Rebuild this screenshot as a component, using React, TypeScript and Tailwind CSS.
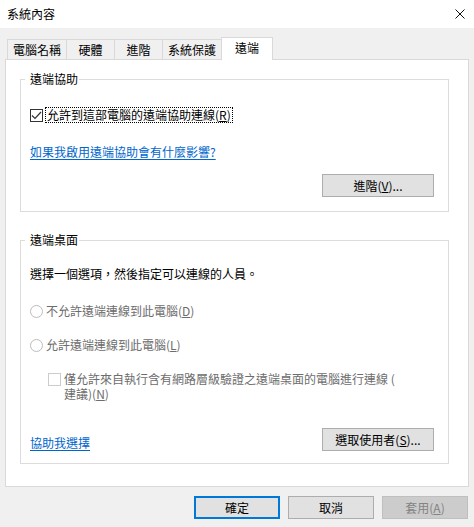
import React from "react";

const font = { fontFamily: '"Noto Sans CJK TC", "Noto Sans", sans-serif' };

const Tab: React.FC<{ label: string; w: string; active?: boolean }> = ({ label, w, active }) =>
  active ? (
    <div className={`${w} h-[23px] -mb-px relative z-10 bg-white border-l border-t border-r border-[#d9d9d9] flex items-start justify-center pt-[2px] leading-[16px]`}>
      {label}
    </div>
  ) : (
    <div className={`${w} h-[20px] bg-[#f0f0f0] border-l border-t border-[#d9d9d9] flex items-center justify-center leading-[16px]`}>
      {label}
    </div>
  );

const Btn: React.FC<{ children: React.ReactNode; w?: string; kind?: "default" | "primary" | "disabled" }> = ({
  children,
  w = "w-[86px]",
  kind = "default",
}) => {
  const cls =
    kind === "primary"
      ? "border-2 border-[#0078d7] bg-[#e1e1e1] text-black"
      : kind === "disabled"
      ? "border border-[#bfbfbf] bg-[#cccccc] text-[#838383]"
      : "border border-[#adadad] bg-[#e1e1e1] text-black";
  return (
    <div className={`${w} h-[23px] ${cls} flex items-center justify-center leading-[16px]`}>{children}</div>
  );
};

const Radio: React.FC<{ children: React.ReactNode }> = ({ children }) => (
  <div className="flex items-center h-[16px] text-[#6d6d6d]">
    <span className="w-[13px] h-[13px] rounded-full border border-[#bcbcbc] bg-white mr-[3px]" />
    <span>{children}</span>
  </div>
);

export default function App() {
  return (
    <div className="w-[474px] h-[527px] bg-[#f0f0f0] flex flex-col text-[12px] text-black overflow-hidden" style={font}>
      {/* title bar */}
      <div className="h-[28px] bg-white flex items-center justify-between pl-[7px] pr-[9px] shrink-0">
        <span className="leading-[16px]">系統內容</span>
        <svg width="10" height="10" viewBox="0 0 10 10">
          <path d="M0.5 0.5 L9.5 9.5 M9.5 0.5 L0.5 9.5" stroke="#111" strokeWidth="1" fill="none" />
        </svg>
      </div>

      <div className="px-[5px] pt-[9px]">
        {/* tabs */}
        <div className="flex items-end h-[22px] pl-[2px]">
          <Tab label="電腦名稱" w="w-[59px]" />
          <Tab label="硬體" w="w-[48px]" />
          <Tab label="進階" w="w-[48px]" />
          <Tab label="系統保護" w="w-[59px]" />
          <Tab label="遠端" w="w-[52px]" active />
        </div>

        {/* panel */}
        <div className="bg-white border border-[#d9d9d9] h-[428px] pl-[14px] pr-[19px] pt-[11px]">
          <fieldset className="border border-[#dcdcdc] pl-[9px] pr-[14px] pb-[14px]">
            <legend className="-ml-[5px] pl-[5px] pr-[1px] leading-[16px]">遠端協助</legend>
            <div className="mt-[20px] flex items-center h-[16px]">
              <span className="w-[13px] h-[13px] border border-[#333333] bg-white flex items-center justify-center mr-[2px]">
                <svg width="11" height="11" viewBox="0 0 11 11">
                  <path d="M1 5.5 L4 8.5 L10 2" stroke="#333" strokeWidth="1.2" fill="none" />
                </svg>
              </span>
              <span className="border border-dotted border-black px-px leading-[14px]">
                允許到這部電腦的遠端協助連線(<u>R</u>)
              </span>
            </div>
            <div className="mt-[21px] leading-[16px]">
              <a className="text-[#0066cc] underline underline-offset-2">如果我啟用遠端協助會有什麼影響?</a>
            </div>
            <div className="mt-[14px] flex justify-end">
              <Btn w="w-[112px]">
                進階(<u>V</u>)...
              </Btn>
            </div>
          </fieldset>

          <fieldset className="mt-[20px] border border-[#dcdcdc] pl-[9px] pr-[14px] pb-[12px]">
            <legend className="-ml-[5px] pl-[5px] pr-[1px] leading-[16px]">遠端桌面</legend>
            <div className="mt-[18px] leading-[16px]">選擇一個選項，然後指定可以連線的人員。</div>
            <div className="mt-[21px]">
              <Radio>
                不允許遠端連線到此電腦(<u>D</u>)
              </Radio>
            </div>
            <div className="mt-[18px]">
              <Radio>
                允許遠端連線到此電腦(<u>L</u>)
              </Radio>
            </div>
            <div className="mt-[18px] pl-[18px] flex items-start text-[#6d6d6d] leading-[15px]">
              <span className="w-[13px] h-[13px] border border-[#cccccc] bg-white mt-[2px] mr-[3px] shrink-0" />
              <span>
                僅允許來自執行含有網路層級驗證之遠端桌面的電腦進行連線 (
                <br />
                建議)(<u>N</u>)
              </span>
            </div>
            <div className="mt-[27px] flex items-end justify-between">
              <a className="text-[#0066cc] underline underline-offset-2 leading-[16px]">協助我選擇</a>
              <Btn w="w-[112px]">
                選取使用者(<u>S</u>)...
              </Btn>
            </div>
          </fieldset>
        </div>

        {/* dialog buttons */}
        <div className="mt-[9px] flex justify-end gap-[8px] mr-[1px]">
          <Btn kind="primary">確定</Btn>
          <Btn>取消</Btn>
          <Btn kind="disabled">
            套用(<u>A</u>)
          </Btn>
        </div>
      </div>
    </div>
  );
}
